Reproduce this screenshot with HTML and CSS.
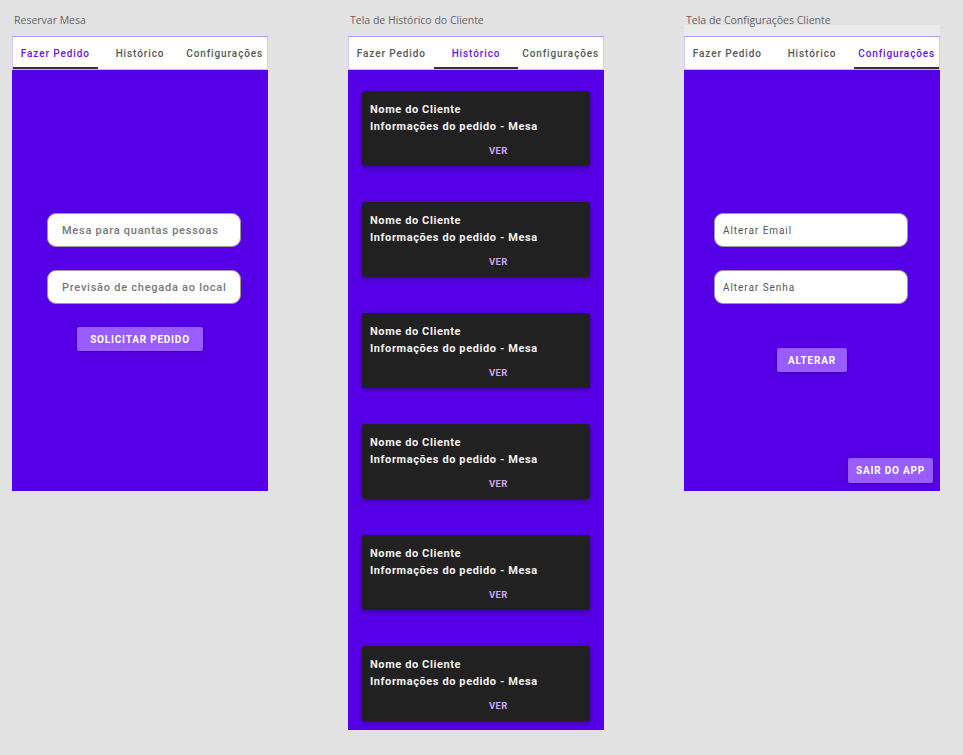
FILE: index.html
```html
<!DOCTYPE html>
<html lang="pt">
<head>
<meta charset="utf-8">
<title>Telas do Cliente</title>
<link rel="stylesheet" href="styles.css">
</head>
<body>
<div class="board">
  <section class="column">
    <div class="title">Reservar Mesa</div>
    <div class="strip"></div>
    <div class="frame">
      <nav class="tabs">
        <div class="tab active">Fazer Pedido</div>
        <div class="tab">Histórico</div>
        <div class="tab">Configurações</div>
      </nav>
      <div class="screen screen-order">
        <div class="field"><span class="ph">Mesa para quantas pessoas</span></div>
        <div class="field"><span class="ph">Previsão de chegada ao local</span></div>
        <button class="btn btn-order">SOLICITAR PEDIDO</button>
      </div>
    </div>
  </section>

  <section class="column">
    <div class="title">Tela de Histórico do Cliente</div>
    <div class="strip"></div>
    <div class="frame">
      <nav class="tabs">
        <div class="tab">Fazer Pedido</div>
        <div class="tab active">Histórico</div>
        <div class="tab">Configurações</div>
      </nav>
      <div class="screen screen-history">
        <div class="card"><div class="card-title">Nome do Cliente</div><div class="card-title">Informações do pedido - Mesa</div><div class="card-action">VER</div></div>
        <div class="card"><div class="card-title">Nome do Cliente</div><div class="card-title">Informações do pedido - Mesa</div><div class="card-action">VER</div></div>
        <div class="card"><div class="card-title">Nome do Cliente</div><div class="card-title">Informações do pedido - Mesa</div><div class="card-action">VER</div></div>
        <div class="card"><div class="card-title">Nome do Cliente</div><div class="card-title">Informações do pedido - Mesa</div><div class="card-action">VER</div></div>
        <div class="card"><div class="card-title">Nome do Cliente</div><div class="card-title">Informações do pedido - Mesa</div><div class="card-action">VER</div></div>
        <div class="card"><div class="card-title">Nome do Cliente</div><div class="card-title">Informações do pedido - Mesa</div><div class="card-action">VER</div></div>
      </div>
    </div>
  </section>

  <section class="column">
    <div class="title">Tela de Configurações Cliente</div>
    <div class="strip strip-grey"></div>
    <div class="frame">
      <nav class="tabs">
        <div class="tab">Fazer Pedido</div>
        <div class="tab">Histórico</div>
        <div class="tab active">Configurações</div>
      </nav>
      <div class="screen screen-settings">
        <div class="field field-settings"><span class="ph ph-dark">Alterar Email</span></div>
        <div class="field field-settings"><span class="ph ph-dark">Alterar Senha</span></div>
        <button class="btn btn-alter">ALTERAR</button>
        <button class="btn btn-exit">SAIR DO APP</button>
      </div>
    </div>
  </section>
</div>
</body>
</html>
```

FILE: styles.css
```css
* { box-sizing: border-box; }

html, body {
  margin: 0;
  padding: 0;
  background: #e2e2e2;
  width: 963px;
  height: 755px;
  overflow: hidden;
}

body {
  font-family: Roboto, "Liberation Sans", sans-serif;
}

.board {
  display: flex;
  gap: 80px;
  padding: 13px 0 0 12px;
}

.column {
  width: 256px;
  display: flex;
  flex-direction: column;
}

.title {
  position: relative;
  z-index: 1;
  height: 12px;
  line-height: 14px;
  font-family: "Open Sans", "Liberation Sans", sans-serif;
  font-size: 10.5px;
  color: #666;
  padding-left: 2px;
  white-space: nowrap;
}

.strip { height: 11px; }
.strip-grey { background: #ebebeb; }

.frame {
  border-top: 1px solid #b49cf2;
  background: #5500e6;
}

.tabs {
  display: flex;
  height: 33px;
  background: #fff;
  border-bottom: 1px solid #c9b5f5;
  border-left: 1px solid #d6c8f7;
  border-right: 1px solid #d6c8f7;
}

.tab {
  flex: 1;
  display: flex;
  align-items: center;
  justify-content: center;
  font-size: 10px;
  font-weight: 500;
  letter-spacing: 0.9px;
  color: #555;
  white-space: nowrap;
  border-bottom: 2px solid transparent;
  padding-top: 2px;
}

.tab.active {
  color: #6a12f0;
  border-bottom-color: #333;
}

.screen {
  display: flex;
  flex-direction: column;
}

.screen-order, .screen-settings {
  height: 421px;
  padding-top: 143px;
}

.field {
  width: 194px;
  height: 34px;
  background: #fff;
  border: 1px solid #9a9a9a;
  border-radius: 9px;
  display: flex;
  align-items: center;
  margin-left: 35px;
  margin-bottom: 23px;
}

.ph {
  font-size: 11px;
  letter-spacing: 0.75px;
  color: #777;
  padding-left: 14px;
  white-space: nowrap;
  font-weight: 500;
}

.field-settings { margin-left: 30px; }

.ph-dark {
  font-size: 10px;
  font-weight: 400;
  color: #555;
  padding-left: 8px;
  letter-spacing: 0.95px;
}

.btn {
  border: 0;
  border-radius: 2px;
  background: #995cfe;
  color: #fff;
  font-family: Roboto, "Liberation Sans", sans-serif;
  font-weight: 700;
  font-size: 10px;
  letter-spacing: 0.8px;
  padding: 0;
  box-shadow: 0 1px 3px rgba(0, 0, 0, 0.25);
}

.btn-order {
  width: 126px;
  height: 24px;
  margin-left: 65px;
}

.btn-alter {
  width: 70px;
  height: 24px;
  margin-left: 93px;
  margin-top: 21px;
}

.btn-exit {
  width: 85px;
  height: 25px;
  align-self: flex-end;
  margin-top: auto;
  margin-right: 7px;
  margin-bottom: 8px;
}

.screen-history {
  padding: 21px 14px 9px;
  gap: 36px;
  height: 660px;
}

.card {
  height: 75px;
  background: #212121;
  border-radius: 3px;
  box-shadow: 0 2px 5px rgba(0, 0, 0, 0.3);
  padding: 10px 8px 0;
}

.card-title {
  font-size: 11px;
  font-weight: 700;
  letter-spacing: 0.6px;
  color: #f2f2f2;
  line-height: 17px;
  white-space: nowrap;
}

.card-action {
  margin-top: 10px;
  padding-left: 119px;
  font-size: 9.5px;
  font-weight: 700;
  color: #cfa3f2;
  letter-spacing: 0.3px;
  line-height: 12px;
}
```
